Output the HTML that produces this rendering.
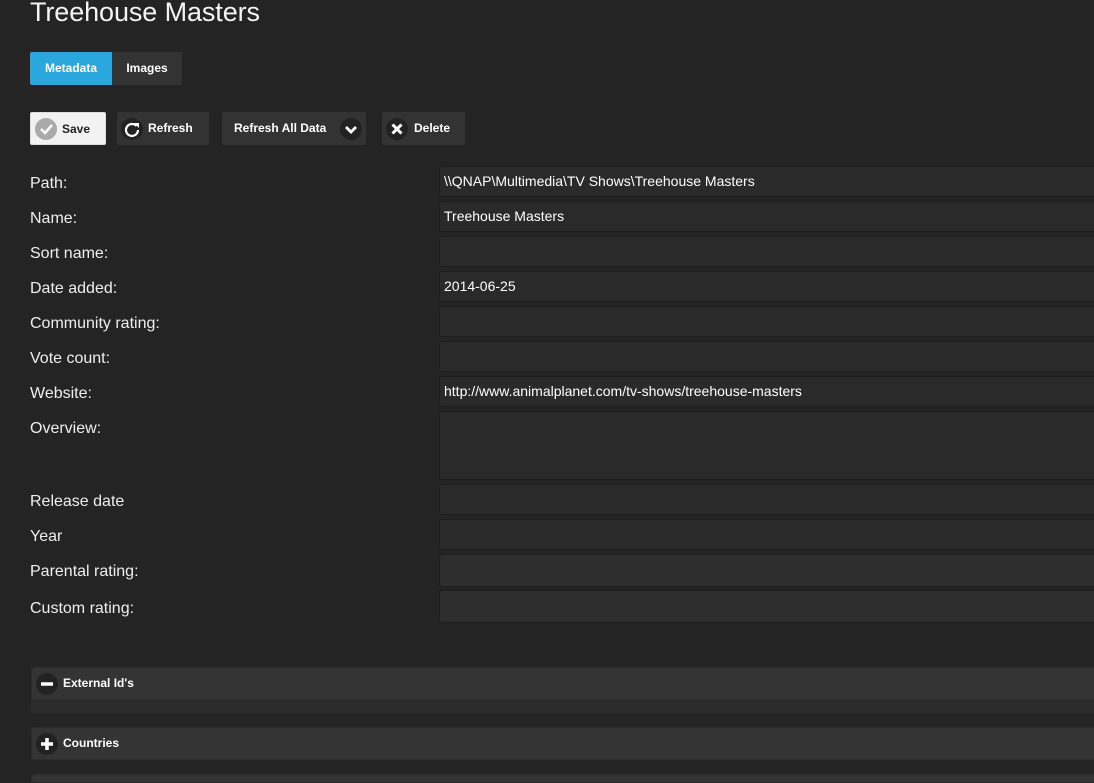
<!DOCTYPE html>
<html style="overflow:hidden;height:783px"><head><style>
body{margin:0;width:1094px;height:783px;overflow:hidden;background:#242424;font-family:"Liberation Sans",sans-serif;color:#fff;position:relative}
h1{position:absolute;left:30px;top:-3px;margin:0;font-weight:300;font-size:27px;color:#f4f4f4;letter-spacing:-0.1px}
.tab{position:absolute;top:52px;height:33px;line-height:33px;font-size:12px;font-weight:bold;text-align:center}
.btn{position:absolute;top:112px;height:33px;background:#333;border-radius:2px;font-size:12px;font-weight:bold;line-height:33px;box-sizing:border-box}
.ic{position:absolute;top:6px;width:22px;height:22px;border-radius:50%;background:#222}
.lab{position:absolute;left:30px;font-size:16px;color:#eee}
.in{position:absolute;left:439px;width:670px;height:31px;background:#2a2a2a;border:1px solid #1e1e1e;border-radius:3px;box-sizing:border-box;font-size:14px;line-height:28px;padding-left:4px;color:#fff}
.col{position:absolute;left:31px;width:1080px;background:#343434;border:1px solid #2c2c2c;border-radius:3px;box-sizing:border-box;font-size:12px;font-weight:bold}
</style></head><body>
<h1>Treehouse Masters</h1>
<div class="tab" style="left:30px;width:82px;background:#2aa7dd;border-radius:2px 0 0 2px">Metadata</div>
<div class="tab" style="left:112px;width:70px;background:#333;border-radius:0 2px 2px 0">Images</div>

<div class="btn" style="left:30px;width:76px;background:#f2f2f2;color:#222;border:1px solid #ddd;padding-left:31px"><div class="ic" style="left:4px;top:5px;background:#aaa"><svg width="22" height="22"><path d="M6 11l4 4 7-8" stroke="#fff" stroke-width="2.5" fill="none"/></svg></div>Save</div>
<div class="btn" style="left:117px;width:92px;padding-left:31px"><div class="ic" style="left:4px"><svg width="22" height="22"><path d="M15.5 8A6 6 0 1 0 17 12" stroke="#fff" stroke-width="2.2" fill="none"/><path d="M13 5h5v5z" fill="#fff"/></svg></div>Refresh</div>
<div class="btn" style="left:222px;width:144px;padding-left:12px">Refresh All Data<div class="ic" style="left:118px"><svg width="22" height="22"><path d="M6 9l5 5 5-5" stroke="#fff" stroke-width="2.8" fill="none"/></svg></div></div>
<div class="btn" style="left:382px;width:83px;padding-left:32px"><div class="ic" style="left:4px"><svg width="22" height="22"><path d="M6.5 6.5l9 9M15.5 6.5l-9 9" stroke="#fff" stroke-width="3" fill="none"/></svg></div>Delete</div>

<div class="lab" style="top:175px">Path:</div><div class="in" style="top:166px">\\QNAP\Multimedia\TV Shows\Treehouse Masters</div>
<div class="lab" style="top:210px">Name:</div><div class="in" style="top:201px">Treehouse Masters</div>
<div class="lab" style="top:245px">Sort name:</div><div class="in" style="top:236px"></div>
<div class="lab" style="top:280px">Date added:</div><div class="in" style="top:271px">2014-06-25</div>
<div class="lab" style="top:315px">Community rating:</div><div class="in" style="top:306px"></div>
<div class="lab" style="top:350px">Vote count:</div><div class="in" style="top:341px"></div>
<div class="lab" style="top:385px">Website:</div><div class="in" style="top:376px">http://www.animalplanet.com/tv-shows/treehouse-masters</div>
<div class="lab" style="top:420px">Overview:</div><div class="in" style="top:411px;height:69px"></div>
<div class="lab" style="top:493px">Release date</div><div class="in" style="top:484px"></div>
<div class="lab" style="top:528px">Year</div><div class="in" style="top:519px"></div>
<div class="lab" style="top:563px">Parental rating:</div><div class="in" style="top:554px;height:33px;background:#2e2e2e"></div>
<div class="lab" style="top:600px">Custom rating:</div><div class="in" style="top:590px;height:33px;background:#2e2e2e"></div>

<div class="col" style="top:699px;height:14px;background:#2c2c2c"></div>
<div class="col" style="top:667px;height:33px;line-height:31px;padding-left:31px"><div class="ic" style="left:4px;top:5px"><svg width="22" height="22"><path d="M5 11h12" stroke="#fff" stroke-width="3.5"/></svg></div>External Id's</div>
<div class="col" style="top:727px;height:33px;line-height:31px;padding-left:31px"><div class="ic" style="left:4px;top:5px"><svg width="22" height="22"><path d="M5 11h12M11 5v12" stroke="#fff" stroke-width="3.5"/></svg></div>Countries</div>
<div class="col" style="top:774px;height:9px"></div>
</body></html>
